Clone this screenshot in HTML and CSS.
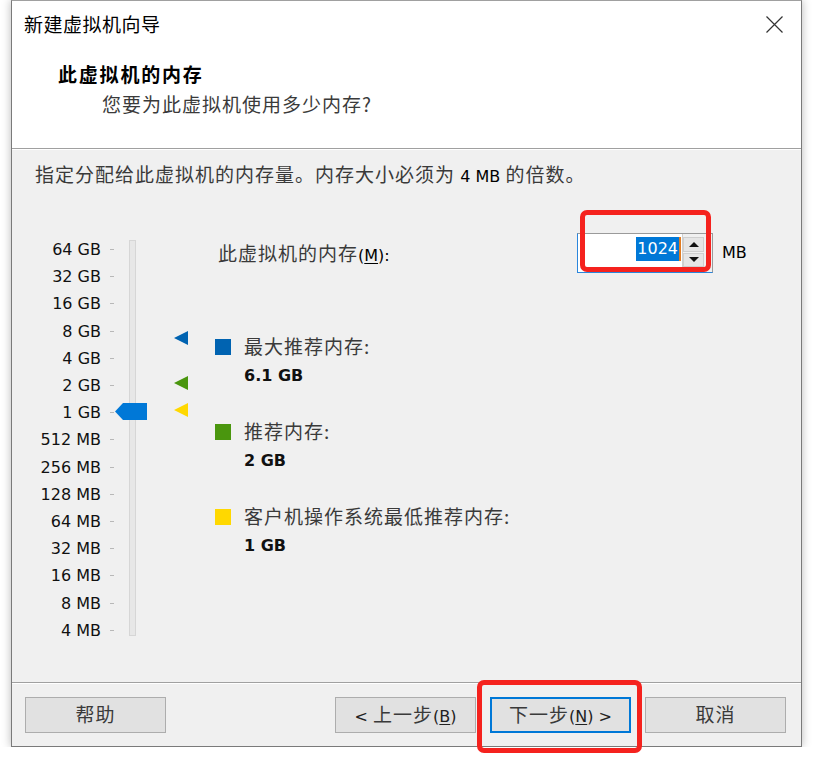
FILE: index.html
```html
<!DOCTYPE html>
<html lang="zh-CN">
<head>
<meta charset="utf-8">
<title>新建虚拟机向导</title>
<link rel="stylesheet" href="styles.css">
</head>
<body>
<div class="window">
  <header class="head">
    <div class="titlebar">
      <span class="title">新建虚拟机向导</span>
      <svg class="close" width="17" height="17" viewBox="0 0 17 17"><path d="M0.5 0.5 L16.5 16.5 M16.5 0.5 L0.5 16.5" stroke="#333" stroke-width="1.2" fill="none"/></svg>
    </div>
    <div class="h-title">此虚拟机的内存</div>
    <div class="h-sub">您要为此虚拟机使用多少内存?</div>
  </header>
  <main class="body">
    <p class="desc">指定分配给此虚拟机的内存量。内存大小必须为 <span class="lat">4 MB</span> 的倍数。</p>
    <div class="content">
      <div class="scale">
        <ul class="labels">
          <li>64 GB</li>
          <li>32 GB</li>
          <li>16 GB</li>
          <li>8 GB</li>
          <li>4 GB</li>
          <li>2 GB</li>
          <li>1 GB</li>
          <li>512 MB</li>
          <li>256 MB</li>
          <li>128 MB</li>
          <li>64 MB</li>
          <li>32 MB</li>
          <li>16 MB</li>
          <li>8 MB</li>
          <li>4 MB</li>
        </ul>
        <div class="track"></div>
        <div class="thumb"></div>
      </div>
      <div class="markers">
        <span class="tri tri-blue"></span>
        <span class="tri tri-green"></span>
        <span class="tri tri-yellow"></span>
      </div>
      <div class="right">
        <div class="mem-row">
          <span class="mem-label">此虚拟机的内存<span class="lat">(<u>M</u>):</span></span>
          <div class="spin">
            <div class="spin-input"><span class="sel">1024</span></div>
            <div class="spin-btns">
              <span class="sbtn"><span class="arr-up"></span></span>
              <span class="sbtn"><span class="arr-down"></span></span>
            </div>
          </div>
          <span class="lat unit">MB</span>
        </div>
        <div class="legend">
          <div class="item">
            <span class="sq sq-blue"></span>
            <span class="lg-label">最大推荐内存:</span>
            <span class="lg-val">6.1 GB</span>
          </div>
          <div class="item">
            <span class="sq sq-green"></span>
            <span class="lg-label">推荐内存:</span>
            <span class="lg-val">2 GB</span>
          </div>
          <div class="item">
            <span class="sq sq-yellow"></span>
            <span class="lg-label">客户机操作系统最低推荐内存:</span>
            <span class="lg-val">1 GB</span>
          </div>
        </div>
      </div>
    </div>
  </main>
  <footer class="foot">
    <button class="btn btn-help"><span>帮助</span></button>
    <button class="btn"><span><span class="lat">&lt;</span> 上一步<span class="lat">(<u>B</u>)</span></span></button>
    <button class="btn btn-default"><span>下一步<span class="lat">(<u>N</u>) &gt;</span></span></button>
    <button class="btn"><span>取消</span></button>
  </footer>
</div>
<div class="hl hl-spin"></div>
<div class="hl hl-next"></div>
</body>
</html>
```

FILE: styles.css
```css
* { box-sizing: border-box; }

body {
  margin: 0;
  background: #ffffff;
  font-family: "Noto Sans CJK SC", sans-serif;
  font-size: 19px;
  color: #3a3a3a;
  letter-spacing: 1px;
}

.lat {
  font-family: "DejaVu Sans", "Noto Sans CJK SC", sans-serif;
  font-size: 16px;
  line-height: 1;
  color: #000;
  letter-spacing: 0;
}

u { text-underline-offset: 2px; }

.window {
  margin-left: 11px;
  width: 791px;
  height: 747px;
  border: 1px solid #7a7a7a;
  border-top-color: #a0a0a0;
  background: #f0f0f0;
  display: flex;
  flex-direction: column;
  box-shadow: 0 0 9px rgba(0, 0, 0, 0.28);
}

/* header */
.head {
  height: 148px;
  background: #fff;
  border-bottom: 1px solid #a0a0a0;
}

.titlebar {
  height: 47px;
  display: flex;
  align-items: center;
  justify-content: space-between;
  padding-left: 12px;
  padding-right: 18px;
}

.title {
  color: #000;
  font-size: 19px;
  line-height: 27px;
  letter-spacing: 0.5px;
  margin-top: -2px;
}

.close { display: block; }

.h-title {
  margin: 12px 0 0 46px;
  font-size: 19px;
  font-weight: bold;
  line-height: 27px;
  color: #000;
  letter-spacing: 1.8px;
}

.h-sub {
  margin: 3px 0 0 90px;
  line-height: 27px;
}

/* body */
.body {
  flex: 1;
  border-top: 1px solid #fff;
  padding-top: 10px;
}

.desc {
  margin: 0;
  padding-left: 23px;
  height: 27px;
  line-height: 27px;
}

.content {
  display: flex;
  margin-top: 46px;
}

.scale {
  position: relative;
  display: flex;
}

.labels {
  list-style: none;
  margin: 0;
  padding: 3px 0 0;
  width: 102px;
  letter-spacing: 0;
}

.labels li {
  display: flex;
  justify-content: flex-end;
  align-items: center;
  height: 27.2px;
  font-family: "DejaVu Sans", sans-serif;
  font-size: 16px;
  color: #111;
}

.labels li::after {
  content: "";
  width: 4px;
  height: 1px;
  margin-left: 9px;
  background: #b8b8b8;
}

.track {
  margin-left: 15px;
  margin-top: 7px;
  width: 7px;
  height: 396px;
  border: 1px solid #d6d6d6;
  background: #e7e7e7;
}

.thumb {
  position: absolute;
  left: 103px;
  top: 170px;
  width: 32px;
  height: 17px;
  background: #0078d7;
  clip-path: polygon(0 50%, 8px 0, 100% 0, 100% 100%, 8px 100%);
}

.markers {
  display: flex;
  flex-direction: column;
  margin-left: 38px;
  width: 14px;
}

.tri {
  width: 0;
  height: 0;
  border-top: 7.5px solid transparent;
  border-bottom: 7.5px solid transparent;
  border-right: 14px solid;
}

.tri-blue { margin-top: 98px; border-right-color: #0063b1; }
.tri-green { margin-top: 31px; border-right-color: #4a960e; }
.tri-yellow { margin-top: 13px; border-right-color: #ffd800; }

.right {
  margin-left: 27px;
}

.mem-row {
  display: flex;
  align-items: center;
  height: 40px;
  padding-left: 3px;
}

.mem-label {
  width: 359px;
  margin-top: -2px;
}

.spin {
  display: flex;
  width: 136px;
  height: 40px;
  border: 1px solid #9a9a9a;
  border-left-color: #2a86dc;
  border-bottom-color: #2a86dc;
  background: #fff;
}

.spin-input {
  flex: 1;
  display: flex;
  justify-content: flex-end;
  align-items: flex-start;
  padding-top: 3px;
  padding-right: 1px;
}

.sel {
  font-family: "DejaVu Sans", sans-serif;
  font-size: 16px;
  line-height: 24px;
  letter-spacing: 0;
  background: #0078d7;
  color: #fff;
  padding: 0 1px;
  border-right: 2px solid #e07b22;
}

.spin-btns {
  width: 30px;
  display: flex;
  flex-direction: column;
  gap: 1px;
  padding: 3px 8px 5px 0;
  background: #f0f0f0;
  border-left: 1px solid #d0d0d0;
}

.sbtn {
  flex: 1;
  display: flex;
  align-items: center;
  justify-content: center;
  background: #e5e5e5;
  border: 1px solid #cfcfcf;
}

.arr-up, .arr-down {
  width: 0;
  height: 0;
  border-left: 5px solid transparent;
  border-right: 5px solid transparent;
}

.arr-up { border-bottom: 5px solid #111; }
.arr-down { border-top: 5px solid #111; }

.unit { margin-left: 9px; }

.legend {
  margin-top: 59px;
  display: flex;
  flex-direction: column;
  gap: 28px;
}

.item {
  display: grid;
  grid-template-columns: 16px auto;
  column-gap: 13px;
  line-height: 27px;
}

.sq {
  width: 16px;
  height: 16px;
  margin-top: 7px;
}

.sq-blue { background: #0063b1; }
.sq-green { background: #4a960e; }
.sq-yellow { background: #ffd800; }

.lg-val {
  grid-column: 2;
  padding-top: 3px;
  font-family: "DejaVu Sans", sans-serif;
  font-size: 16px;
  font-weight: bold;
  color: #111;
  letter-spacing: 0;
}

/* footer */
.foot {
  height: 64px;
  border-top: 1px solid #a0a0a0;
  box-shadow: inset 0 1px #fff;
  display: flex;
  align-items: flex-start;
  gap: 14px;
  padding: 14px 15px 0 13px;
}

.btn {
  width: 141px;
  height: 36px;
  border: 1px solid #adadad;
  background: #e1e1e1;
  font-family: "Noto Sans CJK SC", sans-serif;
  font-size: 19px;
  color: #3a3a3a;
  letter-spacing: 1px;
  padding: 0 0 4px;
  display: flex;
  align-items: center;
  justify-content: center;
}

.btn .lat { color: #222; }

.btn-help { margin-right: auto; }

.btn-default {
  border: 2px solid #0078d7;
}

/* red annotation boxes */
.hl {
  position: absolute;
  border: 5px solid #f5221e;
  border-radius: 7px;
}

.hl-spin {
  left: 580px;
  top: 210px;
  width: 131px;
  height: 62px;
}

.hl-next {
  left: 477px;
  top: 680px;
  width: 165px;
  height: 73px;
}
```
